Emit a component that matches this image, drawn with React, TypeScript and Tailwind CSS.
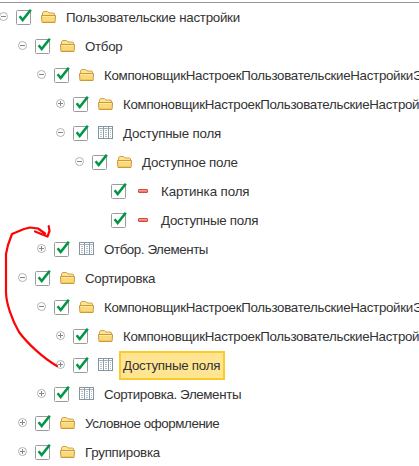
type IconKind = 'folder' | 'table' | 'minus';

interface Row {
  level: number;
  toggle?: '+' | '-';
  icon: IconKind;
  text: string;
  tracking?: string;
  selected?: boolean;
}

const rows: Row[] = [
  { level: 0, toggle: '-', icon: 'folder', text: 'Пользовательские настройки', tracking: 'tracking-[-0.26px]' },
  { level: 1, toggle: '-', icon: 'folder', text: 'Отбор' },
  { level: 2, toggle: '-', icon: 'folder', text: 'КомпоновщикНастроекПользовательскиеНастройкиЭ' },
  { level: 3, toggle: '+', icon: 'folder', text: 'КомпоновщикНастроекПользовательскиеНастройки' },
  { level: 3, toggle: '-', icon: 'table', text: 'Доступные поля', tracking: 'tracking-[-0.2px]' },
  { level: 4, toggle: '-', icon: 'folder', text: 'Доступное поле', tracking: 'tracking-[-0.22px]' },
  { level: 5, icon: 'minus', text: 'Картинка поля', tracking: 'tracking-[-0.1px]' },
  { level: 5, icon: 'minus', text: 'Доступные поля', tracking: 'tracking-[-0.26px]' },
  { level: 2, toggle: '+', icon: 'table', text: 'Отбор. Элементы', tracking: 'tracking-[-0.42px]' },
  { level: 1, toggle: '-', icon: 'folder', text: 'Сортировка' },
  { level: 2, toggle: '-', icon: 'folder', text: 'КомпоновщикНастроекПользовательскиеНастройкиЭ' },
  { level: 3, toggle: '+', icon: 'folder', text: 'КомпоновщикНастроекПользовательскиеНастройки' },
  { level: 3, toggle: '+', icon: 'table', text: 'Доступные поля', selected: true, tracking: 'tracking-[-0.26px]' },
  { level: 2, toggle: '+', icon: 'table', text: 'Сортировка. Элементы', tracking: 'tracking-[-0.37px]' },
  { level: 1, toggle: '+', icon: 'folder', text: 'Условное оформление', tracking: 'tracking-[-0.42px]' },
  { level: 1, toggle: '+', icon: 'folder', text: 'Группировка', tracking: 'tracking-[-0.25px]' },
];

const indents = ['w-0', 'w-[19px]', 'w-[38px]', 'w-[57px]', 'w-[76px]', 'w-[95px]'];

function Toggle({ kind }: { kind?: '+' | '-' }) {
  return (
    <svg className="mt-[9px] -ml-px mr-[8px] h-[9px] w-[9px] shrink-0" viewBox="0 0 9 9" fill="none">
      {kind && (
        <>
          <circle cx="4.5" cy="4.5" r="4" stroke="#a9a9a9" strokeWidth="0.9" fill="#fff" />
          <path d={kind === '+' ? 'M2 4.5H7M4.5 2V7' : 'M2 4.5H7'} stroke="#858585" />
        </>
      )}
    </svg>
  );
}

function Checkbox() {
  return (
    <svg className="mt-[5px] h-[18px] w-[18px] shrink-0" viewBox="0 0 18 18" fill="none">
      <rect x="0.5" y="2.5" width="14" height="14" rx="1" stroke="#9b9b9b" fill="#fff" />
      <path d="M3.6 8.2L6.7 12L14.8 1.8" stroke="#009646" strokeWidth="2.6" />
    </svg>
  );
}

function RowIcon({ kind }: { kind: IconKind }) {
  if (kind === 'folder') {
    return (
      <svg className="h-[14px] w-[16px]" viewBox="0 0 16 14" fill="none">
        <path d="M1.5 12.5V3L2.5 1.5H6.5L8 3H12.8L13.5 4V12.5Z" fill="#fae592" stroke="#d3a04a" />
        <path d="M0.5 5.5H14.5V7L14 12.5H1L.5 7Z" fill="#f9da7a" stroke="#cd983f" />
        <path d="M1.5 6.5H13.5" stroke="#fdeaa0" />
        <path d="M1.5 11.5H13.5" stroke="#f3c75f" />
      </svg>
    );
  }
  if (kind === 'table') {
    return (
      <svg className="h-[14px] w-[16px]" viewBox="0 0 16 14" fill="none" shapeRendering="crispEdges">
        <rect x="0.5" y="0.5" width="14" height="12" fill="#fff" stroke="#8496a2" />
        <path d="M1 2.5H14" stroke="#a3b1ba" />
        <path d="M5.5 1V12M10.5 1V12" stroke="#8d9eaa" />
        <path d="M2 4.5H4M2 6.5H4M2 8.5H4M2 10.5H4M7 4.5H9M7 6.5H9M7 8.5H9M7 10.5H9M12 4.5H13M12 6.5H13M12 8.5H13M12 10.5H13" stroke="#b3bfc7" />
      </svg>
    );
  }
  return (
    <svg className="h-[14px] w-[16px]" viewBox="0 0 16 14" fill="none">
      <rect x="2.5" y="5.5" width="9" height="3" rx="0.5" fill="#f07a6c" stroke="#cf4b43" />
      <path d="M3 6.5H11" stroke="#f59a8c" />
    </svg>
  );
}

function TreeRow({ row }: { row: Row }) {
  const tracking = row.tracking ?? 'tracking-[-0.3px]';
  return (
    <div className="flex h-[29px] items-start">
      <span className={`${indents[row.level]} shrink-0`} />
      <Toggle kind={row.toggle} />
      <Checkbox />
      <span className="mt-[7px] ml-[7px] flex w-4 shrink-0">
        <RowIcon kind={row.icon} />
      </span>
      <span
        className={
          row.selected
            ? `ml-[5px] h-[29px] w-[106px] border-2 border-[#facb2a] bg-[#ffe591] pt-[5px] pl-[2px] whitespace-nowrap ${tracking}`
            : `mt-[7px] ml-[9px] whitespace-nowrap ${tracking}`
        }
      >
        {row.text}
      </span>
    </div>
  );
}

export default function App() {
  return (
    <div className="relative h-[466px] w-[419px] overflow-hidden bg-white pt-[2px] font-['Liberation_Sans',Arial,sans-serif] text-[13.333px] leading-4 text-[#333]">
      <div className="h-px bg-[#999]" />
      {rows.map((row, i) => (
        <TreeRow key={i} row={row} />
      ))}
      <svg className="pointer-events-none absolute top-0 left-0" width="419" height="466" fill="none">
        <path
          d="M57 366C43 358 27 343 19 332C12 320 6 303 6 292V254L8 245L12 234L24 229L30 227.5L38 228.5L45 233.5M35 231.5L47.5 236.5L49.5 231L48.7 226"
          stroke="#fb0505"
          strokeWidth="2.2"
          strokeLinecap="round"
          strokeLinejoin="round"
        />
      </svg>
    </div>
  );
}
